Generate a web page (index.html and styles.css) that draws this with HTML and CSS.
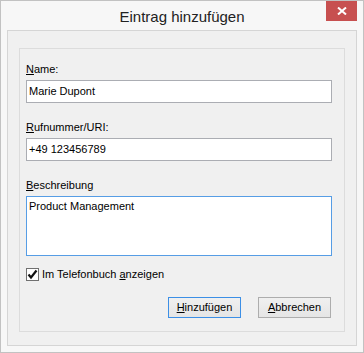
FILE: index.html
```html
<!DOCTYPE html>
<html lang="de">

<head>
  <meta charset="UTF-8">
  <meta name="viewport" content="width=device-width, initial-scale=1.0">
  <title>Eintrag hinzufügen</title>
  <link rel="stylesheet" href="styles.css">
</head>

<body>
  <div class="window">
    <div class="titlebar">
      <span class="title">Eintrag hinzufügen</span>
      <button class="close-btn" type="button" aria-label="Schließen">
        <svg width="10" height="8" viewBox="0 0 10 8">
          <path d="M1 0.5 L9 7.5 M9 0.5 L1 7.5" stroke="#fff" stroke-width="2" fill="none" />
        </svg>
      </button>
    </div>

    <div class="panel">
      <form class="group">
        <div class="field">
          <label for="name"><u>N</u>ame:</label>
          <input type="text" id="name" value="Marie Dupont">
        </div>
        <div class="field">
          <label for="uri"><u>R</u>ufnummer/URI:</label>
          <input type="text" id="uri" value="+49 123456789">
        </div>
        <div class="field">
          <label for="desc"><u>B</u>eschreibung</label>
          <textarea id="desc">Product Management</textarea>
        </div>

        <label class="check-row">
          <span class="checkbox">
            <svg width="11" height="11" viewBox="0 0 11 11">
              <path d="M1.5 5.5 L4 8.5 L9.5 1.5" stroke="#111" stroke-width="2.2" fill="none" />
            </svg>
          </span>
          <span>Im Telefonbuch <u>a</u>nzeigen</span>
        </label>

        <div class="actions">
          <button type="submit" class="btn btn-default"><u>H</u>inzufügen</button>
          <button type="button" class="btn"><u>A</u>bbrechen</button>
        </div>
      </form>
    </div>
  </div>
</body>

</html>
```

FILE: styles.css
```css
* {
  margin: 0;
  padding: 0;
  box-sizing: border-box;
}

body {
  font-family: "Liberation Sans", Arial, sans-serif;
  font-size: 11px;
  line-height: 13px;
  color: #000;
  background: #fff;
}

.window {
  width: 364px;
  height: 353px;
  border: 1px solid #c2c2c2;
  background: #f7f7f7;
  display: flex;
  flex-direction: column;
}

.titlebar {
  position: relative;
  height: 29px;
  padding-top: 2px;
  text-align: center;
}

.title {
  font-size: 15px;
  line-height: 27px;
  color: #222;
}

.close-btn {
  position: absolute;
  top: 0;
  right: 6px;
  width: 31px;
  height: 20px;
  border: none;
  background: #c75050;
  display: flex;
  align-items: center;
  justify-content: center;
}

.panel {
  flex: 1;
  margin: 0 6px 6px 6px;
  padding: 17px 11px 13px 11px;
  border: 1px solid #d5d5d5;
  background: #f0f0f0;
  display: flex;
}

.group {
  flex: 1;
  border: 1px solid #dcdcdc;
  padding: 14px 12px 0 6px;
  display: flex;
  flex-direction: column;
}

.field {
  display: flex;
  flex-direction: column;
  gap: 4px;
}

.field + .field {
  margin-top: 18px;
}

input[type="text"],
textarea {
  font-family: inherit;
  font-size: 11px;
  line-height: 13px;
  color: #000;
  background: #fff;
  border: 1px solid #abadb3;
  outline: none;
}

input[type="text"] {
  height: 23px;
  padding: 3px 2px 5px 2px;
}

textarea {
  height: 60px;
  padding: 3px 2px;
  resize: none;
  overflow: hidden;
  border-color: #569de5;
}

.check-row {
  margin-top: 12px;
  display: flex;
  align-items: center;
  gap: 3px;
  height: 13px;
}

.checkbox {
  width: 13px;
  height: 13px;
  border: 1px solid #707070;
  background: #fff;
  display: flex;
  align-items: center;
  justify-content: center;
}

.actions {
  margin-top: 16px;
  padding-right: 1px;
  display: flex;
  justify-content: flex-end;
  gap: 17px;
}

.btn {
  width: 73px;
  height: 21px;
  font-family: inherit;
  font-size: 11px;
  line-height: 13px;
  color: #000;
  border: 1px solid #adadad;
  background: linear-gradient(#f0f0f0, #e5e5e5);
}

.btn-default {
  border-color: #3c8fe6;
}
```
